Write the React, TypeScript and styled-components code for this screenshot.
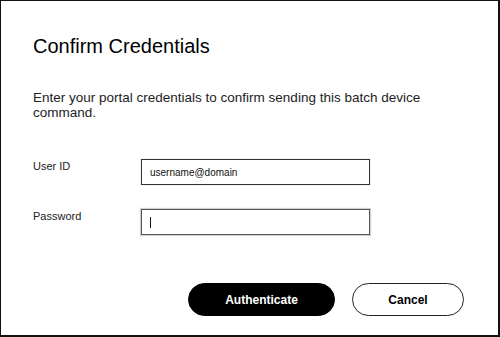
import * as React from 'react';
import styled, {createGlobalStyle} from 'styled-components';

const GlobalStyle = createGlobalStyle`
  html, body {
    margin: 0;
    padding: 0;
    background: #fff;
  }
  body {
    font-family: "Liberation Sans", Arial, sans-serif;
    color: #111;
  }
`;

const StyledDialog = styled.div`
  box-sizing: border-box;
  width: 500px;
  height: 337px;
  display: flex;
  flex-direction: column;
  padding: 33px 34px 0 32px;
  border-style: solid;
  border-color: #111;
  border-width: 1px 2px 2px 1px;
  background: #fff;
`;

const StyledTitle = styled.h1`
  margin: 0;
  font-size: 20px;
  line-height: 24px;
  font-weight: 400;
  color: #000;
`;

const StyledMessage = styled.p`
  margin: 32px 0 0;
  font-size: 13.5px;
  line-height: 15px;
  color: #222;
  max-width: 420px;
`;

const StyledForm = styled.div`
  display: grid;
  grid-template-columns: 108px 229px;
  row-gap: 24px;
  align-items: start;
  margin-top: 39px;
`;

const StyledLabel = styled.label`
  font-size: 11px;
  line-height: 14px;
  color: #222;
`;

const StyledField = styled.div<{$focused?: boolean}>`
  box-sizing: border-box;
  height: 26px;
  display: flex;
  align-items: center;
  padding: 0 8px;
  font-size: 10px;
  color: #111;
  border: 1px solid ${(props) => (props.$focused ? '#555' : '#333')};
  box-shadow: ${(props) =>
    props.$focused ? '0 0 1px 1px rgba(0,0,0,.18)' : '0 0 1px rgba(0,0,0,.25)'};
  background: #fff;
`;

const StyledCaret = styled.span`
  display: block;
  width: 1px;
  height: 11px;
  background: #111;
`;

const StyledActions = styled.div`
  display: flex;
  justify-content: flex-end;
  gap: 17px;
  margin-top: 48px;
`;

const StyledButton = styled.button<{$primary?: boolean}>`
  box-sizing: border-box;
  height: 33px;
  width: ${(props) => (props.$primary ? '147px' : '112px')};
  border-radius: 17px;
  border: 1px solid ${(props) => (props.$primary ? '#000' : '#222')};
  background: ${(props) => (props.$primary ? '#000' : '#fff')};
  color: ${(props) => (props.$primary ? '#fff' : '#000')};
  font-family: "Liberation Sans", Arial, sans-serif;
  font-size: 12px;
  font-weight: 700;
  padding: 0;
  cursor: pointer;
`;

export default function App(): JSX.Element {
  return (
    <>
      <GlobalStyle />
      <StyledDialog>
        <StyledTitle>Confirm Credentials</StyledTitle>
        <StyledMessage>
          Enter your portal credentials to confirm sending this batch device command.
        </StyledMessage>
        <StyledForm>
          <StyledLabel>User ID</StyledLabel>
          <StyledField>username@domain</StyledField>
          <StyledLabel>Password</StyledLabel>
          <StyledField $focused>
            <StyledCaret />
          </StyledField>
        </StyledForm>
        <StyledActions>
          <StyledButton $primary>Authenticate</StyledButton>
          <StyledButton>Cancel</StyledButton>
        </StyledActions>
      </StyledDialog>
    </>
  );
}
